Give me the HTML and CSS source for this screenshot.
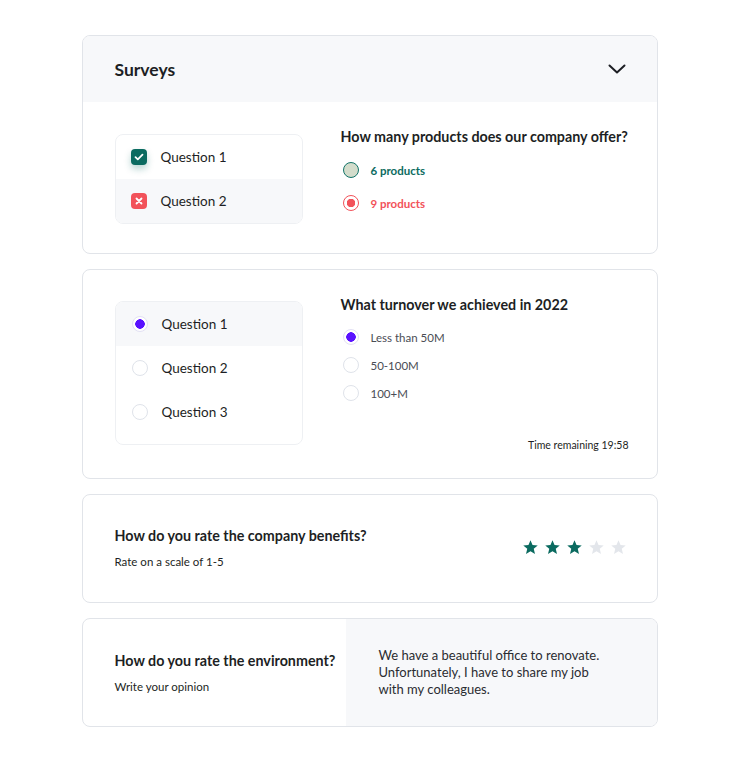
FILE: index.html
```html
<!DOCTYPE html>
<html>
<head>
<meta charset="utf-8">
<link rel="stylesheet" href="styles.css">
</head>
<body>
<div class="page">
  <section class="card">
    <div class="card-head">
      <h2 class="card-title">Surveys</h2>
      <svg class="chev" width="18" height="10" viewBox="0 0 18 10"><path d="M1.5 1.5 L9 8.5 L16.5 1.5" fill="none" stroke="#1d1f24" stroke-width="2" stroke-linecap="round" stroke-linejoin="round"/></svg>
    </div>
    <div class="split">
      <ul class="qlist">
        <li class="qrow">
          <span class="chk ok"><svg width="10" height="8" viewBox="0 0 10 8"><path d="M1.5 4.2 L3.8 6.3 L8.5 1.7" fill="none" stroke="#fff" stroke-width="1.8" stroke-linecap="round" stroke-linejoin="round"/></svg></span>
          <span>Question 1</span>
        </li>
        <li class="qrow alt">
          <span class="chk bad"><svg width="8" height="8" viewBox="0 0 8 8"><path d="M1.5 1.5 L6.5 6.5 M6.5 1.5 L1.5 6.5" fill="none" stroke="#fff" stroke-width="1.8" stroke-linecap="round"/></svg></span>
          <span>Question 2</span>
        </li>
      </ul>
      <div class="qbody">
        <h3 class="qtitle">How many products does our company offer?</h3>
        <div class="opts opts-wide">
          <div class="opt good"><span class="rad rad-good"></span><span>6 products</span></div>
          <div class="opt wrong"><span class="rad rad-wrong"></span><span>9 products</span></div>
        </div>
      </div>
    </div>
  </section>

  <section class="card">
    <div class="split split2">
      <ul class="qlist qlist3">
        <li class="qrow alt"><span class="rad rad-on"></span><span>Question 1</span></li>
        <li class="qrow"><span class="rad"></span><span>Question 2</span></li>
        <li class="qrow"><span class="rad"></span><span>Question 3</span></li>
      </ul>
      <div class="qbody qbody2">
        <h3 class="qtitle">What turnover we achieved in 2022</h3>
        <div class="opts">
          <div class="opt plain"><span class="rad rad-on"></span><span>Less than 50M</span></div>
          <div class="opt plain"><span class="rad"></span><span>50-100M</span></div>
          <div class="opt plain"><span class="rad"></span><span>100+M</span></div>
        </div>
        <div class="timer">Time remaining 19:58</div>
      </div>
    </div>
  </section>

  <section class="card rate">
    <div class="rate-text">
      <h3 class="qtitle">How do you rate the company benefits?</h3>
      <p class="sub">Rate on a scale of 1-5</p>
    </div>
    <div class="stars">
      <svg class="star on" viewBox="0 0 20 20"><path d="M10 1.5 L12.4 7.2 L18.5 7.6 L13.8 11.6 L15.3 17.6 L10 14.3 L4.7 17.6 L6.2 11.6 L1.5 7.6 L7.6 7.2 Z"/></svg>
      <svg class="star on" viewBox="0 0 20 20"><path d="M10 1.5 L12.4 7.2 L18.5 7.6 L13.8 11.6 L15.3 17.6 L10 14.3 L4.7 17.6 L6.2 11.6 L1.5 7.6 L7.6 7.2 Z"/></svg>
      <svg class="star on" viewBox="0 0 20 20"><path d="M10 1.5 L12.4 7.2 L18.5 7.6 L13.8 11.6 L15.3 17.6 L10 14.3 L4.7 17.6 L6.2 11.6 L1.5 7.6 L7.6 7.2 Z"/></svg>
      <svg class="star" viewBox="0 0 20 20"><path d="M10 1.5 L12.4 7.2 L18.5 7.6 L13.8 11.6 L15.3 17.6 L10 14.3 L4.7 17.6 L6.2 11.6 L1.5 7.6 L7.6 7.2 Z"/></svg>
      <svg class="star" viewBox="0 0 20 20"><path d="M10 1.5 L12.4 7.2 L18.5 7.6 L13.8 11.6 L15.3 17.6 L10 14.3 L4.7 17.6 L6.2 11.6 L1.5 7.6 L7.6 7.2 Z"/></svg>
    </div>
  </section>

  <section class="card opinion">
    <div class="op-left">
      <h3 class="qtitle">How do you rate the environment?</h3>
      <p class="sub">Write your opinion</p>
    </div>
    <div class="op-right">
      <p class="op-text">We have a beautiful office to renovate. Unfortunately, I have to share my job with my colleagues.</p>
    </div>
  </section>
</div>
</body>
</html>
```

FILE: styles.css
```css
* { box-sizing: border-box; }
body {
  margin: 0;
  background: #fff;
  font-family: Lato, "Noto Sans", sans-serif;
  color: #1d1f24;
}
.page {
  width: 576px;
  margin: 35px auto 0;
  display: flex;
  flex-direction: column;
  gap: 15px;
}
.card {
  border: 1px solid #e1e4e9;
  border-radius: 8px;
  background: #fff;
  overflow: hidden;
}
.card-head {
  height: 66px;
  background: #f7f8fa;
  display: flex;
  align-items: center;
  justify-content: space-between;
  padding: 0 31px 0 32px;
}
.card-title {
  margin: 0;
  font-size: 17.5px;
  font-weight: 700;
}
.chev { display: block; }
.split {
  display: flex;
  gap: 38px;
  padding: 32px 27px 29px 32px;
}
.split2 { padding-top: 31px; padding-bottom: 33px; }
.qlist {
  list-style: none;
  margin: 0;
  padding: 0;
  width: 188px;
  flex: none;
  border: 1px solid #eef0f3;
  border-radius: 8px;
  overflow: hidden;
  align-self: flex-start;
}
.qlist3 { padding-bottom: 10px; }
.qrow {
  height: 44px;
  display: flex;
  align-items: center;
  gap: 14px;
  padding-left: 15px;
  font-size: 13.5px;
  color: #1d1f24;
}
.qrow.alt { background: #f7f8fa; }
.chk {
  width: 16px;
  height: 16px;
  border-radius: 4px;
  display: flex;
  align-items: center;
  justify-content: center;
  flex: none;
}
.chk.ok { background: #0b6b60; box-shadow: 0 4px 7px rgba(11,107,96,0.28); }
.chk.bad { background: #f2525a; }
.qbody { flex: 1; display: flex; flex-direction: column; margin-top: -6px; }
.qtitle {
  margin: 0;
  font-size: 14.3px;
  font-weight: 700;
  line-height: 18px;
  color: #1d1f24;
  white-space: nowrap;
}
.opts {
  display: flex;
  flex-direction: column;
  gap: 10px;
  margin-top: 14px;
}
.opts-wide { gap: 15px; margin-top: 15px; }
.opt {
  display: flex;
  align-items: center;
  gap: 12px;
  font-size: 11.5px;
  height: 18px;
  padding-left: 2px;
}
.opt.good { color: #0b6b60; font-weight: 700; }
.opt.wrong { color: #f2525a; font-weight: 700; }
.opt.plain { color: #4a4d55; }
.rad {
  width: 16px;
  height: 16px;
  border-radius: 50%;
  border: 1px solid #dfe3ea;
  background: #fff;
  flex: none;
  display: inline-block;
}
.qrow .rad { margin-left: 1px; }
.rad-on {
  border-color: #e3e1f4;
  background: radial-gradient(circle, #5a12ff 0 4.5px, #fff 5px);
}
.rad-good {
  border: 1.5px solid #137469;
  background: #d3dccb;
}
.rad-wrong {
  border: 1.5px solid #f2525a;
  background: radial-gradient(circle, #f2525a 0 4px, #fff 4.5px);
}
.qbody2 { align-self: stretch; margin-top: -5px; }
.timer {
  margin-top: auto;
  margin-bottom: -7px;
  text-align: right;
  font-size: 10.5px;
  color: #1d1f24;
  padding-right: 1px;
  line-height: 14px;
}
.rate {
  display: flex;
  align-items: center;
  justify-content: space-between;
  padding: 29px 30px 31px 32px;
  height: 109px;
}
.sub {
  margin: 10px 0 0;
  font-size: 11.5px;
  color: #1d1f24;
  line-height: 14px;
}
.stars { display: flex; gap: 5px; }
.star { width: 17px; height: 17px; fill: #e3e6eb; display: block; }
.star.on { fill: #0b6b60; }
.opinion {
  display: flex;
  height: 109px;
}
.op-left {
  width: 263px;
  flex: none;
  padding: 0 0 0 32px;
  display: flex;
  flex-direction: column;
  justify-content: center;
}
.op-left .sub { margin-top: 10px; }
.op-right {
  flex: 1;
  background: #f7f8fa;
  display: flex;
  align-items: center;
  padding: 0 31px 0 33px;
}
.op-text {
  margin: 0;
  font-size: 13px;
  line-height: 17px;
  color: #2a2c31;
  width: 230px;
}
```
